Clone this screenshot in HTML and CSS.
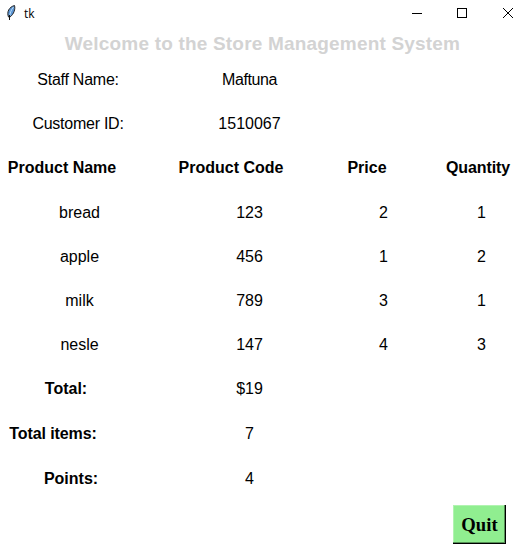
FILE: index.html
```
<!DOCTYPE html>
<html lang="en">
<head>
<meta charset="utf-8">
<title>tk</title>
<link rel="stylesheet" href="styles.css">
</head>
<body>
<header class="titlebar">
  <svg class="feather" width="12" height="18" viewBox="0 0 12 18"><path d="M2.500 13C.5 8 3 3 8.500 1.500C9.500 5 8 10 4 13Z" fill="#5b95d5" stroke="#222" stroke-width="1"/><path d="M7.500 3C5 6 4 9 3.500 13" fill="none" stroke="#b9dbf5" stroke-width="1"/><path d="M3.500 11V16" stroke="#111"/></svg>
  <span class="name">tk</span>
  <svg class="controls" width="114" height="26" viewBox="0 0 114 26" fill="none" stroke="#000" shape-rendering="crispEdges"><path d="M0 13.500H10M45.500 8.500H54.500V17.500H45.500Z"/><path d="M91 8L101 18M101 8L91 18" shape-rendering="auto"/></svg>
</header>
<h1>Welcome to the Store Management System</h1>
<main class="grid">
  <span class="label">Staff Name:</span><span class="code name-value">Maftuna</span><span></span><span></span>
  <span class="label">Customer ID:</span><span class="code">1510067</span><span></span><span></span>
  <b>Product Name</b><b>Product Code</b><b>Price</b><b class="quantity">Quantity</b>
  <span class="item">bread</span><span class="code">123</span><span class="price">2</span><span class="qty">1</span>
  <span class="item">apple</span><span class="code">456</span><span class="price">1</span><span class="qty">2</span>
  <span class="item">milk</span><span class="code">789</span><span class="price">3</span><span class="qty">1</span>
  <span class="item">nesle</span><span class="code">147</span><span class="price">4</span><span class="qty">3</span>
  <b class="total">Total:</b><span class="code">$19</span><span></span><span></span>
  <b class="items">Total items:</b><span class="code">7</span><span></span><span></span>
  <b class="points">Points:</b><span class="code">4</span><span></span><span></span>
</main>
<footer><button class="quit">Quit</button></footer>
</body>
</html>
```
FILE: styles.css
```
* { box-sizing: border-box; }
body { margin: 0; width: 526px; height: 546px; overflow: hidden; background: #fff; color: #000; font: 16px/20px "Liberation Sans", Arial, sans-serif; }
.titlebar { display: flex; height: 30px; padding: 4px 0 0 6px; }
.name { margin: 0 0 0 6px; font: 12px/20px "Open Sans", sans-serif; }
.controls { margin: -4px 0 0 auto; }
h1 { width: 525px; margin: 3px 0 0; text-align: center; color: #d3d3d3; font-size: 19px; line-height: 22px; letter-spacing: .19px; }
.grid { display: grid; grid-template-columns: 124px 214px 58px 130px; grid-template-rows: repeat(8, 44.2px) 45px 45px; margin-top: 3px; align-items: center; justify-items: center; height: 443px; }
.grid > * { white-space: nowrap; }
.label { margin-left: 32px; letter-spacing: -.25px; }
.code { margin-left: 37px; }
.name-value { letter-spacing: -.4px; }
.item { margin-left: 35px; }
.price { margin-left: 33px; }
.quantity { margin-left: 34px; letter-spacing: -.1px; }
.qty { margin-left: 41px; }
.total { margin-left: 8px; }
.items { margin-right: 18px; letter-spacing: -.1px; }
.points { margin-left: 18px; }
footer { display: flex; justify-content: flex-end; padding: 4px 20px 0 0; }
.quit { width: 53px; height: 39px; padding: 0; background: #90ee90; border: 0; box-shadow: inset -1px -1px #000, inset -2px -2px #569056, inset 1px 1px #b0f4b0; font: bold 18.67px "Liberation Serif", "Times New Roman", serif; }
```
